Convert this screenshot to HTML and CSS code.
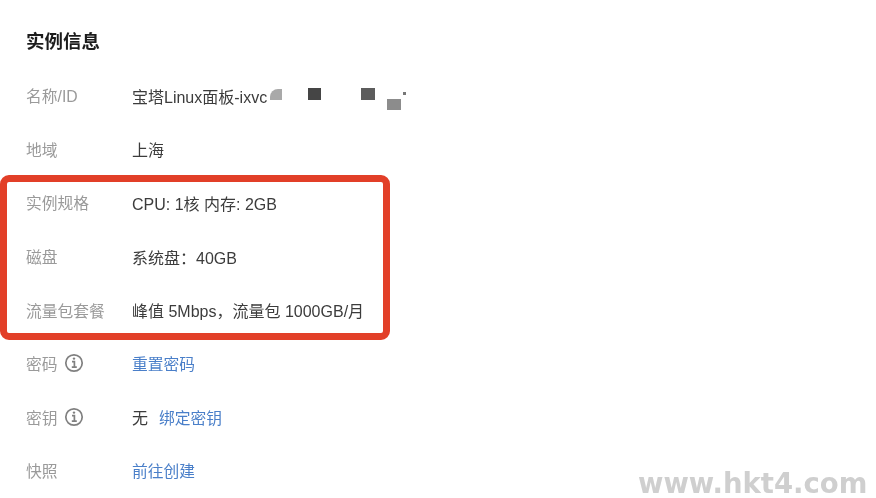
FILE: index.html
```html
<!DOCTYPE html>
<html lang="zh-CN">
<head>
<meta charset="utf-8">
<title>实例信息</title>
<link rel="stylesheet" href="styles.css">
</head>
<body>
<main class="page">
  <div class="content">
    <h1 class="title">实例信息</h1>
    <dl class="list">
      <div class="row">
        <dt class="label">名称/ID</dt>
        <dd class="value">宝塔Linux面板-ixvc</dd>
      </div>
      <div class="row">
        <dt class="label">地域</dt>
        <dd class="value">上海</dd>
      </div>
      <div class="row">
        <dt class="label">实例规格</dt>
        <dd class="value">CPU: 1核 内存: 2GB</dd>
      </div>
      <div class="row">
        <dt class="label">磁盘</dt>
        <dd class="value">系统盘：40GB</dd>
      </div>
      <div class="row">
        <dt class="label">流量包套餐</dt>
        <dd class="value">峰值 5Mbps，流量包 1000GB/月</dd>
      </div>
      <div class="row">
        <dt class="label">密码
          <svg class="info" viewBox="0 0 20 20" aria-hidden="true"><circle cx="10" cy="10" r="8.2"/><path d="M8 8.6h2.4v5.4M7.8 14.2h5"/><circle class="dot" cx="10" cy="5.6" r="1.2"/></svg>
        </dt>
        <dd class="value"><a class="link" href="#">重置密码</a></dd>
      </div>
      <div class="row">
        <dt class="label">密钥
          <svg class="info" viewBox="0 0 20 20" aria-hidden="true"><circle cx="10" cy="10" r="8.2"/><path d="M8 8.6h2.4v5.4M7.8 14.2h5"/><circle class="dot" cx="10" cy="5.6" r="1.2"/></svg>
        </dt>
        <dd class="value">无<a class="link link-gap" href="#">绑定密钥</a></dd>
      </div>
      <div class="row">
        <dt class="label">快照</dt>
        <dd class="value"><a class="link" href="#">前往创建</a></dd>
      </div>
    </dl>
  </div>
  <div class="highlight"></div>
  <i class="blot blot-a"></i>
  <i class="blot blot-b"></i>
  <i class="blot blot-c"></i>
  <i class="blot blot-d"></i>
  <i class="blot blot-e"></i>
  <div class="watermark">www.hkt4.com</div>
</main>
</body>
</html>
```
FILE: styles.css
```css
* { box-sizing: border-box; }
html, body { margin: 0; background: #fff; }
.page {
  position: relative;
  width: 876px;
  height: 498px;
  overflow: hidden;
  font-family: "Liberation Sans", "Noto Sans CJK SC", sans-serif;
  font-size: 16px;
  color: #3c3c3c;
}
.content {
  padding: 31px 0 0 26px;
  filter: blur(0.5px);
}
.title {
  margin: 0;
  font-size: 18.5px;
  line-height: 22px;
  font-weight: 700;
  color: #1c1c1c;
}
.list { margin: 16px 0 0; }
.row {
  display: flex;
  align-items: center;
  height: 53.6px;
}
.label {
  display: flex;
  align-items: center;
  gap: 6px;
  width: 106px;
  flex: none;
  font-size: 15.75px;
  color: #9a9a9a;
}
.value { margin: 0; white-space: nowrap; }
.link { font-size: 15.75px; color: #4a7fc9; text-decoration: none; }
.link-gap { margin-left: 11px; }
.info { width: 20px; height: 20px; margin-top: -1px; fill: none; stroke: #808080; stroke-width: 1.7; }
.info .dot { fill: #808080; stroke: none; }
.highlight {
  position: absolute;
  left: 0;
  top: 175px;
  width: 390px;
  height: 165px;
  border: 7px solid #e23f28;
  border-radius: 9px;
}
.blot { position: absolute; display: block; filter: blur(0.5px); }
.blot-a { left: 270px; top: 89px; width: 12px; height: 11px; background: #a9a9a9; border-top-left-radius: 8px; }
.blot-b { left: 308px; top: 88px; width: 13px; height: 12px; background: #454545; }
.blot-c { left: 361px; top: 88px; width: 14px; height: 12px; background: #5c5c5c; }
.blot-d { left: 387px; top: 99px; width: 14px; height: 11px; background: #8c8c8c; }
.blot-e { left: 403px; top: 92px; width: 3px; height: 3px; background: #777; }
.watermark {
  position: absolute;
  left: 638px;
  top: 467px;
  font-family: "DejaVu Sans", sans-serif;
  font-size: 27.5px;
  line-height: 32px;
  font-weight: 700;
  color: #cfcfcf;
  white-space: nowrap;
  filter: blur(0.4px);
}
```
